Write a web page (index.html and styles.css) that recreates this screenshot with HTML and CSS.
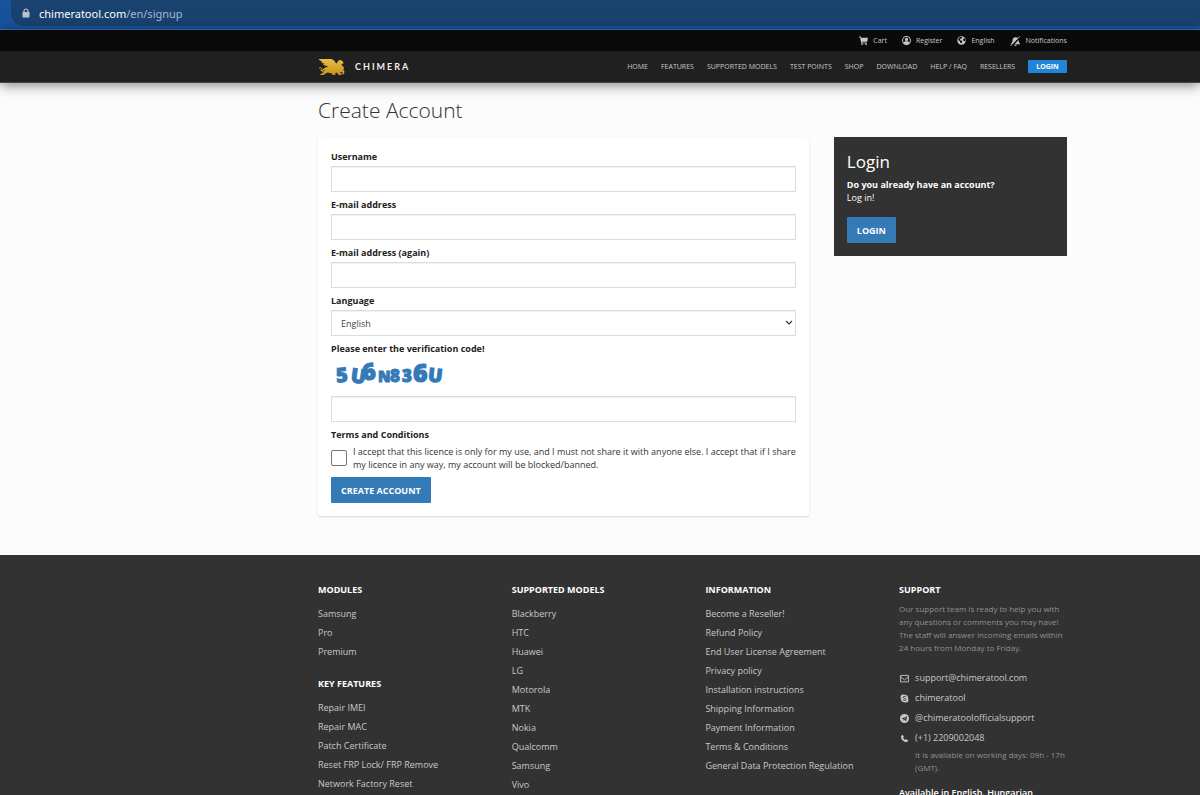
FILE: index.html
```
<!DOCTYPE html>
<html lang="en">
<head>
  <title>Create Account - Chimera</title>
  <meta charset="UTF-8">
  <meta name="viewport" content="width=device-width, initial-scale=1.0">
  <link rel="stylesheet" href="styles.css">
</head>
<body>
  <div class="browser-bar">
    <div class="address">
      <svg class="lock" viewBox="0 0 8 10" width="8" height="10"><path d="M2 4V3a2 2 0 0 1 4 0v1" fill="none" stroke="currentColor" stroke-width="1.2"/><rect x="0.5" y="4" width="7" height="5.5" rx="0.6" fill="currentColor"/></svg>
      <span class="url"><span class="host">chimeratool.com</span>/en/signup</span>
    </div>
  </div>

  <header class="site-header">
    <div class="top-bar">
      <div class="container top-links">
        <a href="#"><svg viewBox="0 0 16 16" width="9" height="9"><path d="M0 1h3l.6 2H16l-1.500 7H5.200l.3 1.500H14V13H4L2 2.500H0z"/><circle cx="5.500" cy="14.500" r="1.500"/><circle cx="12.500" cy="14.500" r="1.500"/></svg>Cart</a>
        <a href="#"><svg viewBox="0 0 16 16" width="9" height="9"><circle cx="8" cy="8" r="7" fill="none" stroke="currentColor" stroke-width="1.800"/><circle cx="8" cy="6" r="2.800"/><path d="M2.500 12c1-2.300 3-2.500 5.500-2.500s4.500.2 5.500 2.500c-1.500 2-3.500 3-5.500 3s-4-1-5.500-3z"/></svg>Register</a>
        <a href="#"><svg viewBox="0 0 16 16" width="9" height="9"><circle cx="8" cy="8" r="7.500"/><path d="M6 1.500 9.500 2 8 4.500 6 5 5 7.500l3 .5 1.500 2-2 3.500L5.500 11 5 9 2 7.500 3 4zM11 5l3.500-.5.5 4-2.500 1L11 7.500z" fill="#0a0a0a"/></svg>English</a>
        <a href="#"><svg viewBox="0 0 18 16" width="11" height="10"><path d="M1 13.500C3.500 11.500 4 9 4.200 6.500 4.500 3.500 6.500 2 9 2c1.700 0 3 .6 3.900 1.600L3.500 13.500zM14 6.500c.2 3 .8 5 3 7H7.500zM7 14.200h4a2 2 0 0 1-4 0z"/><path d="M1 15.500 16 .5" stroke="currentColor" stroke-width="1.500"/></svg>Notifications</a>
      </div>
    </div>
    <div class="container main-bar">
      <a class="logo" href="#">
        <svg viewBox="0 0 54 36" width="27" height="18">
          <defs><linearGradient id="gold" x1="0" y1="0" x2="0" y2="1"><stop offset="0" stop-color="#e9bd45"/><stop offset="1" stop-color="#c8921f"/></linearGradient></defs>
          <path fill="url(#gold)" d="M1 2h25c5 1 8 4 10 9l2-1c1-4 4-6 7-6l5 3 1 4-4 1 1 3 4 4-1 5 2 3-1 5-4 1 1-5-5 1 3 3v2h-6l-3-5-4 2 1 3h-6l-1-3-9-2-5 3-3 2h-7l1-2 5-2 4-6-5 2-6-1c5 0 7-3 12-6l6-3c-6 0-9-1-11-4h4c-4-1-7-3-8-5h4C7 7 3 5 1 2z"/>
          <path fill="none" stroke="#d9a62e" stroke-width="2" d="M16 26c-6 4-10 1-9-3s-3-5-5-2"/>
        </svg>
        <span class="logo-name">CHIMERA</span>
      </a>
      <nav class="main-nav">
        <a href="#">HOME</a>
        <a href="#">FEATURES</a>
        <a href="#">SUPPORTED MODELS</a>
        <a href="#">TEST POINTS</a>
        <a href="#">SHOP</a>
        <a href="#">DOWNLOAD</a>
        <a href="#">HELP / FAQ</a>
        <a href="#">RESELLERS</a>
        <a class="nav-login" href="#">LOGIN</a>
      </nav>
    </div>
  </header>

  <main class="container content">
    <h1>Create Account</h1>
    <div class="columns">
      <form class="card">
        <div class="form-group">
          <label for="username">Username</label>
          <input type="text" id="username" class="form-control">
        </div>
        <div class="form-group">
          <label for="email">E-mail address</label>
          <input type="email" id="email" class="form-control">
        </div>
        <div class="form-group">
          <label for="email2">E-mail address (again)</label>
          <input type="email" id="email2" class="form-control">
        </div>
        <div class="form-group">
          <label for="language">Language</label>
          <div class="select-wrap">
            <select id="language" class="form-control">
              <option>English</option>
            </select>
            <svg class="chevron" viewBox="0 0 8 6" width="8" height="6"><path d="m1 1 3 3 3-3" fill="none" stroke="#333" stroke-width="1.200"/></svg>
          </div>
        </div>
        <div class="form-group">
          <label for="captcha">Please enter the verification code!</label>
          <svg class="captcha" viewBox="0 0 120 30" width="120" height="30">
            <text x="5" y="24" font-size="20" transform="rotate(-4 11 16)">5</text>
            <text x="20" y="25" font-size="20" transform="rotate(8 26 18)">U</text>
            <text x="31" y="22" font-size="23" transform="rotate(-8 37 14)">6</text>
            <text x="47" y="24" font-size="15">N</text>
            <text x="59" y="24" font-size="17">8</text>
            <text x="71" y="24" font-size="17">3</text>
            <text x="82" y="24" font-size="25">6</text>
            <text x="97" y="24" font-size="19" transform="rotate(6 104 18)">U</text>
          </svg>
          <input type="text" id="captcha" class="form-control">
        </div>
        <div class="form-group terms">
          <span class="group-title">Terms and Conditions</span>
          <div class="check-row">
            <input type="checkbox" id="accept">
            <label for="accept">I accept that this licence is only for my use, and I must not share it with anyone else. I accept that if I share my licence in any way, my account will be blocked/banned.</label>
          </div>
        </div>
        <button type="submit" class="btn">CREATE ACCOUNT</button>
      </form>

      <aside class="login-box">
        <h2>Login</h2>
        <p><strong>Do you already have an account?</strong><br>Log in!</p>
        <button type="button" class="btn">LOGIN</button>
      </aside>
    </div>
  </main>

  <footer class="site-footer">
    <div class="container footer-grid">
      <div>
        <h3>MODULES</h3>
        <ul>
          <li><a href="#">Samsung</a></li>
          <li><a href="#">Pro</a></li>
          <li><a href="#">Premium</a></li>
        </ul>
        <h3>KEY FEATURES</h3>
        <ul>
          <li><a href="#">Repair IMEI</a></li>
          <li><a href="#">Repair MAC</a></li>
          <li><a href="#">Patch Certificate</a></li>
          <li><a href="#">Reset FRP Lock/ FRP Remove</a></li>
          <li><a href="#">Network Factory Reset</a></li>
        </ul>
      </div>
      <div>
        <h3>SUPPORTED MODELS</h3>
        <ul>
          <li><a href="#">Blackberry</a></li>
          <li><a href="#">HTC</a></li>
          <li><a href="#">Huawei</a></li>
          <li><a href="#">LG</a></li>
          <li><a href="#">Motorola</a></li>
          <li><a href="#">MTK</a></li>
          <li><a href="#">Nokia</a></li>
          <li><a href="#">Qualcomm</a></li>
          <li><a href="#">Samsung</a></li>
          <li><a href="#">Vivo</a></li>
        </ul>
      </div>
      <div>
        <h3>INFORMATION</h3>
        <ul>
          <li><a href="#">Become a Reseller!</a></li>
          <li><a href="#">Refund Policy</a></li>
          <li><a href="#">End User License Agreement</a></li>
          <li><a href="#">Privacy policy</a></li>
          <li><a href="#">Installation instructions</a></li>
          <li><a href="#">Shipping Information</a></li>
          <li><a href="#">Payment Information</a></li>
          <li><a href="#">Terms &amp; Conditions</a></li>
          <li><a href="#">General Data Protection Regulation</a></li>
        </ul>
      </div>
      <div>
        <h3>SUPPORT</h3>
        <p class="note">Our support team is ready to help you with any questions or comments you may have! The staff will answer incoming emails within 24 hours from Monday to Friday.</p>
        <ul class="contacts">
          <li><a href="#"><svg viewBox="0 0 16 16" width="9" height="9"><path d="M1 2.500h14v11.500H1zM1 5l7 5.500L15 5" fill="none" stroke="currentColor" stroke-width="1.600"/></svg>support@chimeratool.com</a></li>
          <li><a href="#"><svg viewBox="0 0 16 16" width="9" height="9"><circle cx="5.500" cy="5.500" r="4.500"/><circle cx="10.500" cy="10.500" r="4.500"/><circle cx="8" cy="8" r="6.500"/><path d="M11 5.500C10 3.800 5.500 3.900 5.500 6c0 2.300 5 1.500 5 4 0 2-4.500 2-5.500 0" fill="none" stroke="#323232" stroke-width="1.700"/></svg>chimeratool</a></li>
          <li><a href="#"><svg viewBox="0 0 16 16" width="9" height="9"><circle cx="8" cy="8" r="8"/><path d="M3 8l9.500-4L11 12.500 8 10.500 6.500 12 6 9.500z" fill="#323232"/><path d="m6.500 9.500 4-3.500" stroke="#c8c8c8"/></svg>@chimeratoolofficialsupport</a></li>
          <li><a href="#"><svg viewBox="0 0 16 16" width="9" height="9"><path d="M2 3.500 4.500 1.500 7 5 5.500 6.800c.8 1.600 2 2.800 3.700 3.700L11 9l3.500 2.500-2 2.500c-5 1.500-12-5-10.500-10.500z"/></svg>(+1) 2209002048</a></li>
        </ul>
        <p class="note hours">It is available on working days: 09h - 17h (GMT).</p>
        <p class="languages">Available in English, Hungarian</p>
      </div>
    </div>
  </footer>
</body>
</html>
```
FILE: styles.css
```
:root {
  --blue: #337ab7;
  --dark: #323232;
  --light: #c8c8c8;
  --border: #dcdcdc;
}

* {
  margin: 0;
  padding: 0;
  box-sizing: border-box;
}

::-webkit-scrollbar {
  display: none;
}

body {
  background: #fcfcfc;
  color: #333;
  font-family: 'Open Sans', sans-serif;
  font-size: 9px;
  line-height: 13px;
}

a {
  color: inherit;
  text-decoration: none;
}

ul {
  list-style: none;
}

svg {
  flex-shrink: 0;
  fill: currentColor;
}

.container {
  width: 62.4%;
  margin-left: 26.5%;
}

/* Address bar */
.browser-bar {
  height: 30px;
  padding: 0 0 4px 11px;
  background: #17529c;
  border-bottom: 1px solid #4272b0;
}

.address {
  display: flex;
  align-items: center;
  gap: 9px;
  height: 26px;
  padding-left: 11px;
  background: #19426f;
  border-radius: 0 0 0 13px;
  color: #b9c4d3;
}

.url {
  font-family: 'Noto Sans', sans-serif;
  font-size: 11px;
  color: #a3b9d6;
}

.host {
  color: #fff;
}

/* Header */
.site-header {
  background: #202020;
  border-bottom: 1px solid #444;
  box-shadow: 0 2px 12px rgba(0, 0, 0, 0.5);
}

.top-bar {
  background: #0a0a0a;
  color: var(--light);
  font-size: 7px;
}

.top-links {
  display: flex;
  justify-content: flex-end;
  align-items: center;
  gap: 15px;
  height: 21px;
}

.top-links a {
  display: flex;
  align-items: center;
  gap: 5px;
}

.main-bar {
  display: flex;
  justify-content: space-between;
  align-items: center;
  height: 31px;
}

.logo {
  display: flex;
  align-items: center;
  gap: 10px;
  color: #eee;
}

.logo-name {
  font-family: Lato, sans-serif;
  font-size: 9px;
  font-weight: 700;
  letter-spacing: 2px;
}

.main-nav {
  display: flex;
  align-items: center;
  gap: 13px;
  color: var(--light);
  font-size: 7px;
}

.nav-login {
  padding: 0 8px;
  background: #2185d9;
  border-radius: 1px;
  color: #fff;
  font-weight: 700;
}

/* Content */
.content {
  padding: 13px 0 39px;
}

h1 {
  margin-bottom: 13px;
  font-size: 21px;
  font-weight: 300;
  line-height: 28px;
}

.columns {
  display: grid;
  grid-template-columns: 491fr 233fr;
  align-items: start;
  gap: 25px;
}

.card {
  padding: 13px;
  background: #fff;
  border-radius: 2px;
  box-shadow: 0 1px 2px rgba(0, 0, 0, 0.15);
}

.form-group {
  margin-bottom: 6px;
}

.form-group > label,
.group-title {
  display: block;
  padding-bottom: 3px;
  color: #222;
  font-weight: 700;
}

.form-control {
  display: block;
  width: 100%;
  height: 26px;
  padding: 0 9px;
  background: #fff;
  border: 1px solid var(--border);
  box-shadow: inset 0 1px 1px rgba(0, 0, 0, 0.06);
  color: #444;
  font: inherit;
}

.select-wrap {
  position: relative;
}

select.form-control {
  appearance: none;
}

.chevron {
  position: absolute;
  top: 10px;
  right: 3px;
  pointer-events: none;
}

.captcha {
  display: block;
  margin-bottom: 8px;
  fill: var(--blue);
  stroke: var(--blue);
  font-family: 'Open Sans', sans-serif;
  font-weight: 800;
}

.check-row {
  display: flex;
  align-items: center;
  gap: 6px;
  padding-top: 1px;
}

.check-row input {
  appearance: none;
  flex-shrink: 0;
  width: 16px;
  height: 16px;
  border: 1px solid #767676;
  border-radius: 2px;
}

.btn {
  height: 26px;
  padding: 0 10px;
  background: var(--blue);
  border: none;
  border-radius: 1px;
  color: #fff;
  font: inherit;
  font-weight: 700;
  cursor: pointer;
}

.login-box {
  padding: 13px;
  background: var(--dark);
  color: #fff;
}

.login-box h2 {
  margin-bottom: 5px;
  font-size: 17px;
  font-weight: 400;
  line-height: 23px;
}

.login-box p {
  margin-bottom: 13px;
}

/* Footer */
.site-footer {
  padding: 28px 0;
  background: var(--dark);
  color: var(--light);
}

.footer-grid {
  display: grid;
  grid-template-columns: repeat(4, 1fr);
  column-gap: 26px;
}

.site-footer h3 {
  margin-bottom: 6px;
  color: #fff;
  font-size: 9px;
}

.site-footer ul {
  margin-bottom: 16px;
  padding-top: 2px;
  line-height: 19px;
}

.note {
  color: #919191;
  font-size: 8px;
}

.site-footer .contacts {
  margin: 12px 0 0;
  line-height: 20px;
}

.contacts a {
  display: flex;
  align-items: center;
  gap: 6px;
  padding-left: 1px;
}

.hours {
  padding-left: 16px;
}

.languages {
  margin-top: 12px;
  color: #fff;
  font-weight: 600;
}
```
